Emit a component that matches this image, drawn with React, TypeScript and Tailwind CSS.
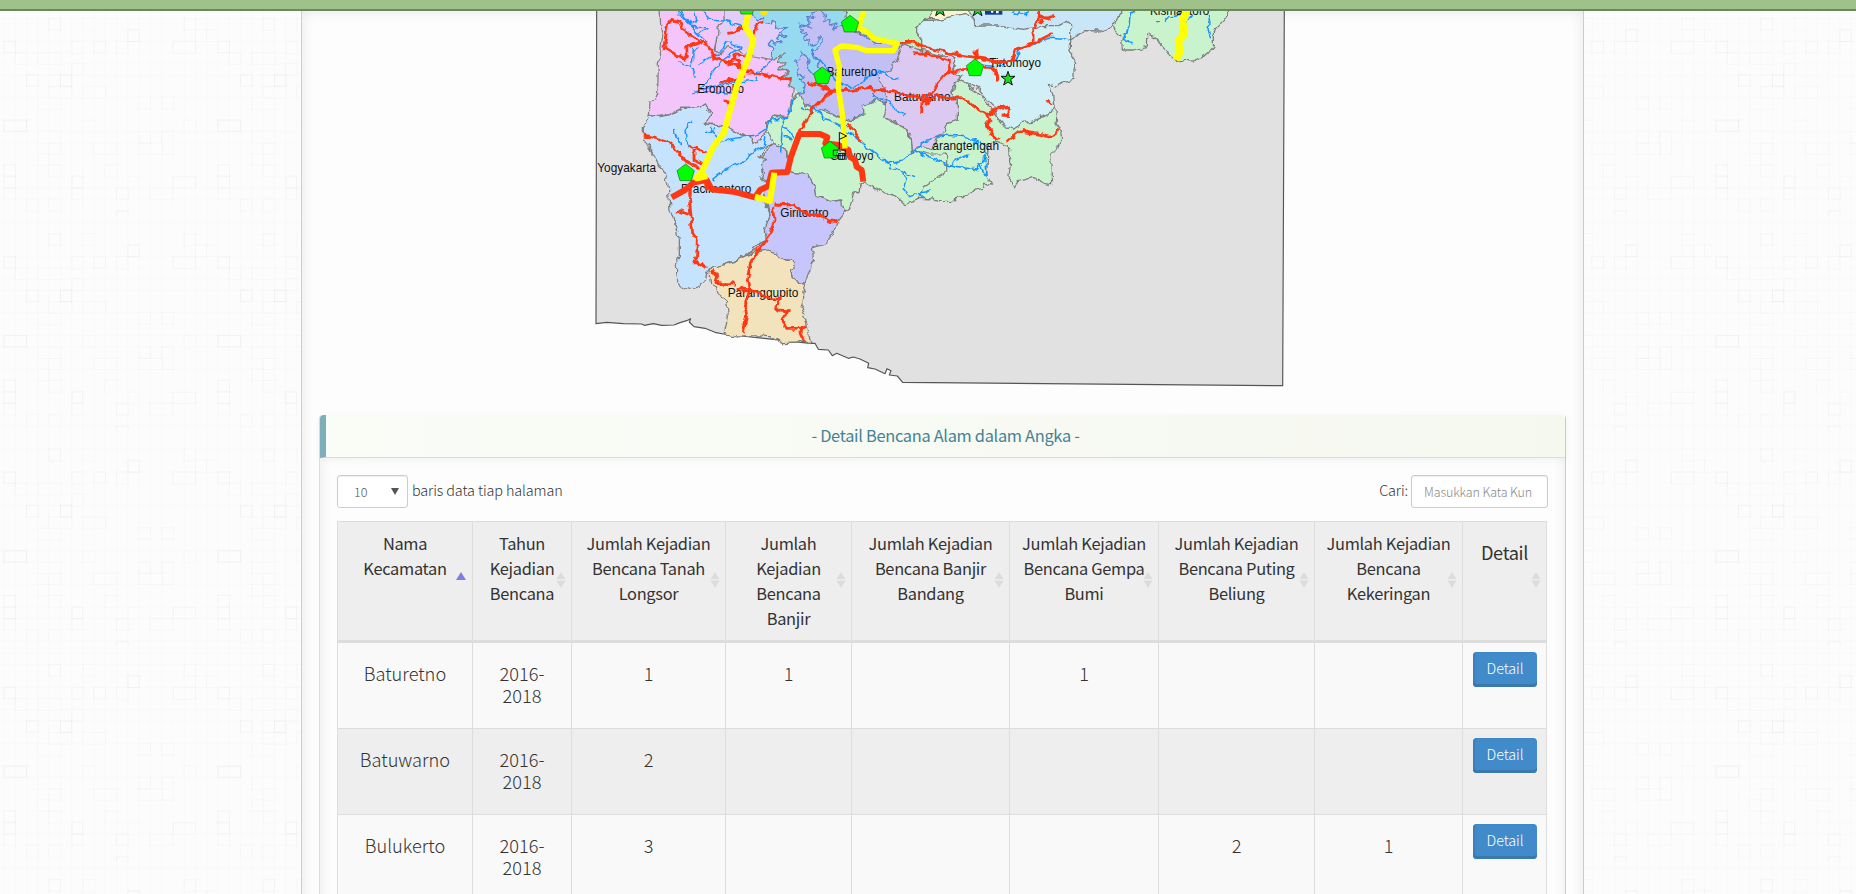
import React from "react";

const sans = "font-['Noto_Sans_CJK_SC',sans-serif]";

/* ---------- Page texture ---------- */

const tiles: [number, number, number, number, number][] = [
  [147, 56, 34, 34, 10], [250, 56, 32, 34, 5], [384, 90, 33, 34, 12], [12, 125, 34, 33, 12],
  [282, 125, 34, 33, 10], [216, 125, 33, 34, 8], [350, 125, 34, 34, 6], [384, 125, 33, 34, 5],
  [520, 125, 66, 34, 10], [46, 159, 34, 33, 6], [114, 159, 70, 33, 6], [216, 191, 33, 33, 6],
  [80, 225, 34, 34, 12], [182, 225, 33, 34, 14], [147, 225, 34, 34, 4], [249, 260, 67, 34, 7],
  [147, 260, 68, 34, 6], [417, 292, 34, 34, 7], [486, 292, 34, 34, 6], [114, 294, 68, 34, 5],
  [12, 361, 68, 33, 14], [249, 361, 33, 33, 5], [417, 395, 34, 34, 8], [486, 395, 33, 67, 9],
  [114, 395, 68, 34, 5], [282, 429, 68, 33, 7], [417, 429, 70, 33, 6], [147, 429, 35, 33, 6],
  [114, 462, 32, 33, 5], [12, 495, 34, 34, 9], [147, 495, 36, 34, 8], [316, 495, 34, 34, 5],
  [12, 529, 34, 34, 10], [216, 529, 32, 34, 12], [384, 531, 33, 34, 5], [520, 531, 66, 32, 9],
  [12, 565, 34, 33, 7], [216, 565, 32, 33, 8], [350, 565, 34, 33, 9], [450, 565, 68, 33, 6],
  [80, 598, 34, 36, 6], [147, 598, 36, 36, 6], [350, 634, 34, 34, 12], [316, 668, 68, 32, 6],
  [587, 90, 34, 34, 5], [553, 56, 33, 34, 6], [620, 90, 22, 34, 6], [553, 361, 33, 34, 4],
];

const steps = Array.from({ length: 19 }, (_, i) => 12 + i * 33.8);

function Texture({ from, className, id }: { from: number; className: string; id: string }) {
  return (
    <div className={className}>
      <svg className="h-full w-full" viewBox={`${from} 11 ${id === "l" ? 301 : 272} 883`} preserveAspectRatio="none">
        <defs>
          <pattern id={"tex-" + id} width="642" height="646" patternUnits="userSpaceOnUse" patternTransform="scale(0.33333)">
            {steps.map((s, i) => (
              <g key={i} stroke="#000" strokeWidth="3" strokeOpacity="0.008">
                <path d={`M${s} 0V646`} />
                <path d={`M0 ${s + 10}H642`} />
              </g>
            ))}
            {tiles.map(([x, y, w, h, o], i) => (
              <g key={i} fill="none" strokeWidth="3">
                <path d={`M${x + 3} ${y + 3}h${w - 5}v${h - 5}h${5 - w}z`} stroke="#fff" strokeOpacity="0.8" />
                <path d={`M${x} ${y}h${w}v${h}h${-w}z`} stroke="#000" strokeOpacity={o / 340} />
              </g>
            ))}
          </pattern>
        </defs>
        <rect x={from} y="0" width="400" height="894" fill={`url(#tex-${id})`} />
      </svg>
    </div>
  );
}

/* ---------- Map ---------- */

const landmass =
  "M20 20L18 971 50 967 100 971 155 972 163 976 190 971 215 976 252 975 270 968 290 962 302 956 298 966 312 980 345 985 375 997 400 1002 660 1030 675 1030 685 1048 715 1050 727 1067 740 1060 775 1075 790 1071 810 1077 836 1090 833 1103 855 1107 885 1121 891 1106 903 1112 898 1125 922 1128 938 1147 2078 1157 2083 20Z";

const regions: { c: string; s?: string; d: string }[] = [
  { c: "#96daf0", s: "none", d: "M480 20H800V200L700 240 630 280 600 270 500 180Z" },
  { c: "#e1cdf8", s: "#5b7fd0", d: "M383 20L480 20 490 50 505 60 525 50 515 68 540 75 545 58 560 68 555 85 590 82 575 98 590 110 572 108 560 118 572 130 552 132 545 120 535 132 548 145 540 160 550 172 535 182 490 178 440 158 410 150 375 158 378 100Z" },
  { c: "#f3c5fb", s: "#808080", d: "M210 20L212 80 216 105 210 140 212 165 205 190 203 280 195 300 180 303 178 342 205 350 240 345 250 338 275 325 325 325 342 314 350 325 362 340 348 372 380 373 415 380 428 395 450 405 480 408 490 430 505 428 520 405 530 395 530 368 550 345 592 350 603 310 610 270 598 255 602 240 575 230 598 218 590 208 565 210 588 188 560 190 585 162 550 180 525 175 480 165 440 150 413 140 395 160 372 153 383 100 385 75 405 60 405 20Z" },
  { c: "#c2bff4", s: "#5b7fd0", d: "M690 33L665 40 675 52 650 50 662 66 652 75 668 85 630 72 640 88 633 98 650 104 638 115 658 122 655 138 680 130 690 110 700 120 690 140 665 150 672 170 690 185 682 200 700 215 672 225 650 200 655 182 645 162 630 160 632 175 617 185 628 205 622 225 640 228 628 238 645 250 640 262 650 275 625 280 635 310 655 318 690 330 705 328 740 350 760 355 780 362 810 345 822 340 820 320 850 302 900 310 960 300 960 130 860 130 790 90 750 80 728 88 738 70 715 75 722 58 700 62 710 45Z" },
  { c: "#b9f2ba", d: "M760 20L772 80 800 95 860 120 905 128 940 132 995 150 995 120 980 100 980 80 995 62 1020 55 1040 20Z" },
  { c: "#f8f4cf", d: "M1030 20L1025 33 1018 55 1080 58 1130 40 1140 55 1150 40 1150 20Z" },
  { c: "#c8e6f8", d: "M1140 20L1145 50 1160 80 1440 125 1480 92 1530 93 1565 82 1590 70 1600 20Z" },
  { c: "#c9f3cd", d: "M1110 240L1095 250 1088 290 1105 300 1105 360 1070 370 1055 400 1025 445 990 435 965 460 960 410 940 380 890 362 882 340 888 315 860 300 845 310 820 318 822 345 780 362 745 352 690 330 645 318 625 278 612 290 603 330 590 352 552 346 530 370 530 400 550 430 590 450 600 515 650 525 675 560 680 585 720 605 750 600 762 637 778 628 790 585 808 570 810 545 825 548 885 582 908 582 945 611 985 595 1030 597 1050 607 1085 607 1100 592 1135 588 1150 570 1180 565 1183 550 1205 552 1190 525 1195 430 1220 425 1258 440 1262 485 1255 540 1275 558 1285 545 1330 532 1365 550 1385 555 1382 470 1400 445 1415 410 1412 395 1398 370 1402 335 1392 318 1380 325 1330 350 1270 380 1220 350 1180 290Z" },
  { c: "#d0eff7", d: "M980 80L995 62 1040 60 1070 52 1130 40 1148 60 1155 75 1220 75 1300 88 1350 80 1400 80 1430 65 1442 75 1442 125 1440 155 1460 190 1452 210 1452 238 1420 245 1400 258 1378 253 1388 285 1392 318 1380 340 1330 362 1300 368 1270 388 1240 375 1220 350 1215 320 1195 300 1165 265 1110 240 1115 230 1090 215 1095 175 1050 165 995 150 995 120 980 100Z" },
  { c: "#dbc9f2", d: "M940 132L995 150 1000 160 1060 170 1080 165 1097 178 1088 212 1115 230 1088 260 1090 290 1105 300 1105 360 1070 370 1058 400 1040 415 1025 450 990 435 965 460 960 410 945 385 905 362 885 355 885 320 890 290 885 265 868 240 868 222 900 210 920 180Z" },
  { c: "#c6c5fc", d: "M550 430L575 440 590 450 590 510 600 515 650 525 675 560 680 585 720 605 755 600 758 620 765 638 740 670 730 700 710 730 668 745 670 780 655 820 645 850 610 840 605 810 613 782 585 780 545 755 487 752 520 690 540 645 520 570 515 540 515 470Z" },
  { c: "#c5e3fd", d: "M178 342L205 350 240 345 275 325 325 325 342 314 362 340 348 372 415 380 450 405 480 408 490 430 505 428 530 390 545 415 550 430 525 445 510 470 525 480 512 500 520 515 512 535 535 550 525 570 522 600 540 645 523 690 525 720 500 740 487 752 430 785 365 805 350 820 345 845 330 858 300 868 280 862 265 850 257 825 257 800 262 780 268 765 268 720 260 680 240 630 235 560 225 520 205 490 185 455 160 415 160 385Z" },
  { c: "#f2e3bc", d: "M365 805L430 785 487 758 535 750 560 760 585 780 613 782 615 800 605 810 610 840 645 850 638 880 642 895 632 925 645 940 640 950 650 970 662 1027 625 1026 575 1028 540 1010 500 1008 430 1007 402 1000 415 950 410 905 385 885 380 860 362 850 358 820Z" },
  { c: "#c9f3cd", d: "M1595 20L1595 40 1580 60 1565 80 1595 110 1597 150 1630 150 1672 138 1673 105 1690 112 1720 140 1750 175 1770 181 1810 183 1855 160 1870 140 1870 95 1900 65 1915 45 1915 20Z" },
];

const rivers = [
  "M265 40L350 128M270 35L300 72 320 60 315 35M300 75L355 85 325 103 300 75M340 38L360 58 405 60 460 82M395 150L410 125 453 140 400 180 322 280M310 140L308 180 300 200 265 188M300 200L316 230M310 160L325 140M325 193L365 168 390 165M310 275L360 262 430 248 500 240 505 215 545 180M340 275L440 280",
  "M305 358L285 390 290 425 300 440M255 390L268 425 275 435M342 393L375 400M357 385L375 405M375 385L370 400M375 408L395 428 450 412 500 405 530 385 540 358 595 352M365 540L390 520 430 495 455 490 490 455 520 440 525 410",
  "M618 288L605 325 578 365 572 455M578 383L600 392 608 415M580 410L605 420M630 320L660 335 680 325 705 355 745 375 770 395 800 415 845 455 895 490 940 480 975 450 1000 425 1060 405 1130 410 1170 430 1195 440 1180 485 1160 510 1080 495 1040 480 1000 465 970 450",
  "M1080 495L1100 480 1135 465M1165 490L1190 530M1180 455L1188 500 1192 528M895 490L900 502 975 530M940 515L948 540 940 570 960 590 985 580 1010 575 1022 565M985 578L1005 592",
  "M665 145L675 165 705 200 735 240 780 262 820 250 825 232 870 215 925 240M848 275L855 295 885 300 945 350M1175 195L1220 200 1275 180 1290 145 1340 130 1375 115 1420 118 1445 125",
  "M1635 36L1620 45 1618 70 1600 118 1628 132M1695 66L1710 62M1725 62L1735 52 1790 42M1790 68L1805 45M1855 45L1860 70 1850 85 1862 115M1265 38L1280 44 1290 38 1308 44 1318 36",
];

const roads = [
  "M222 140L232 75 245 58 270 65 275 85 330 125 290 140 292 170 280 175 222 142M330 125L355 140 375 175 450 200 470 215 500 220 605 238M420 190L440 162 465 168M435 165L455 210M412 100L430 98 455 85 460 92M490 108L505 70 518 66M390 248L430 240 465 228M405 300L415 312 422 305Z",
  "M160 405L200 412 240 432 260 455 290 485 330 505M300 438L330 452 352 458M312 450L312 480 350 500M298 590L302 640 308 700 322 720 320 770 312 785 325 798 340 790 352 803",
  "M655 248L720 270 780 272 840 262 860 272 910 272 950 288 1015 290 1045 250 1078 210 1080 185 1010 160 965 158M725 272L665 330 630 398M925 127L970 127 1010 142 1090 162 1160 173 1220 185 1265 185 1275 152 1330 130 1385 102M1330 130L1328 85M1335 83L1345 55 1342 35M1345 45L1370 55 1392 45M1355 55L1355 70M1158 145L1158 185M1065 225L1110 212 1150 210M1180 205L1205 205 1222 220 1223 245",
  "M995 342L996 300 1020 300 1040 285 1070 295 1120 293 1150 320 1190 345 1200 360 1192 378 1205 400 1225 418M1185 345L1215 330 1240 318 1255 330 1253 347 1238 345M1250 425L1290 393 1330 400 1360 405 1380 412 1395 405 1400 385M1370 297L1385 312M1000 300L1010 310 1020 312",
  "M770 370L790 390 812 422M550 612L610 615 655 645 690 645 712 662 742 665M548 620L552 665 530 720 500 755 480 795 472 840 478 870 465 920 470 945 460 1000M370 812L380 830 375 845 395 850 435 852M440 866L480 870 540 895 570 898 560 930 598 932 575 955 590 985 630 985 650 980M632 985L630 1000 645 1028M258 630L302 645",
];

const pent = "M0-26L26-6 17 24-17 24-26-6Z";
const star = "M0-22L5-7 21-7 8 3 13 19 0 10-13 19-8 3-21-7-5-7Z";

const labels: [number, number, number, string][] = [
  [22, 515, 176, "Yogyakarta"], [322, 278, 140, "Eromoko"], [273, 579, 211, "Pracimantoro"],
  [710, 227, 152, "Baturetno"], [912, 304, 170, "Batuwarno"], [720, 479, 130, "Giriwoyo"],
  [1027, 451, 200, "arangtengah"], [1198, 200, 155, "Tirtomoyo"], [571, 652, 145, "Giritontro"],
  [413, 890, 212, "Paranggupito"], [1680, 45, 178, "Kismantoro"],
];

function RegionMap() {
  return (
    <svg className="block h-[382px] w-[705px]" viewBox="0 33 2115 1146">
      <defs>
        <filter id="rough" filterUnits="userSpaceOnUse" x="0" y="0" width="2115" height="1179" colorInterpolationFilters="sRGB">
          <feTurbulence type="fractalNoise" baseFrequency="0.045" numOctaves="2" seed="4" result="n" />
          <feDisplacementMap in="SourceGraphic" in2="n" scale="20" xChannelSelector="R" yChannelSelector="G" />
        </filter>
      </defs>
      <path d={landmass} fill="#e1e1e1" stroke="#555" strokeWidth="3.5" strokeLinejoin="round" />
      <g filter="url(#rough)">
        <g strokeWidth="3.8" strokeLinejoin="round">
          {regions.map((r, i) => (
            <path key={i} d={r.d} fill={r.c} stroke={r.s ?? "#7d7d7d"} />
          ))}
        </g>
        <path d="M965 450L1015 462 1070 462 1070 515 1030 540 1000 560 988 595" fill="none" stroke="#7d7d7d" strokeWidth="3.5" />
        <g fill="none" stroke="#1493ff" strokeWidth="4.4" strokeLinejoin="round">
          {rivers.map((d, i) => <path key={i} d={d} />)}
        </g>
      </g>
      <g fill="#111" fontSize="37" className="font-['Liberation_Sans',sans-serif]">
        {labels.map(([x, y, w, t]) => (
          <text key={t} x={x} y={y} textLength={w} lengthAdjust="spacingAndGlyphs">{t}</text>
        ))}
      </g>
      <g fill="none" stroke="#ff3813" strokeWidth="8.5" strokeLinejoin="round" filter="url(#rough)">
        {roads.map((d, i) => <path key={i} d={d} />)}
      </g>
      <g fill="none" stroke="#ff3813" strokeWidth="18" strokeLinejoin="round">
        <path d="M245 592L285 570 310 548 350 540 365 568 430 575 495 592 510 570 535 558 545 518 592 516 603 470 628 402 690 402 712 412 706 430 745 435 775 450 780 470 795 480 800 500 815 510 820 545" />
        <path d="M345 530L350 570M300 560L300 590" strokeWidth="10" />
      </g>
      <g fill="none" stroke="#ffff00" strokeWidth="18" strokeLinejoin="round">
        <path d="M478 33L465 80 490 118 480 160 465 200 440 260 408 375 402 398 370 440 335 515 320 535 352 528" />
        <path d="M495 590L540 603 553 518" />
        <path d="M765 445L757 340 745 265 748 200 735 150 755 138 800 142 830 152 910 152 922 130 900 126 850 115 835 98 805 82 822 33" strokeWidth="16" />
        <path d="M1795 20L1778 60 1782 105 1765 120 1770 155 1758 180" strokeWidth="22" />
      </g>
      <circle cx="522" cy="34" r="12" fill="#ffe600" />
      <g fill="#00ff00" stroke="#1a6b1a" strokeWidth="2">
        {[[697, 227], [780, 72], [720, 450], [287, 518], [1155, 203], [470, 18]].map(([x, y]) => (
          <path key={x} d={pent} transform={`translate(${x} ${y})`} />
        ))}
      </g>
      <g fill="#16e016" stroke="#111" strokeWidth="3">
        <path d={star} transform="translate(1254 236)" />
        <path d={star} transform="translate(1050 28)" />
        <path d={star} transform="translate(1163 28)" />
      </g>
      <path d="M1185 33V44H1237V33" fill="#0b3a9a" />
      <path d="M1203 33V38H1210V33ZM1218 33V40H1226V33Z" fill="#fff" />
      <path d="M748 448V397L770 408 748 418M730 450H766V467H730ZM745 460H764V478H745Z" fill="none" stroke="#111" strokeWidth="3" />
    </svg>
  );
}

/* ---------- Table ---------- */

const columns: { lines: string[]; w: string }[] = [
  { lines: ["Nama", "Kecamatan"], w: "w-[135px]" },
  { lines: ["Tahun", "Kejadian", "Bencana"], w: "w-[99px]" },
  { lines: ["Jumlah Kejadian", "Bencana Tanah", "Longsor"], w: "w-[154px]" },
  { lines: ["Jumlah", "Kejadian", "Bencana", "Banjir"], w: "w-[126px]" },
  { lines: ["Jumlah Kejadian", "Bencana Banjir", "Bandang"], w: "w-[158px]" },
  { lines: ["Jumlah Kejadian", "Bencana Gempa", "Bumi"], w: "w-[149px]" },
  { lines: ["Jumlah Kejadian", "Bencana Puting", "Beliung"], w: "w-[156px]" },
  { lines: ["Jumlah Kejadian", "Bencana", "Kekeringan"], w: "w-[148px]" },
  { lines: ["Detail"], w: "w-[84px]" },
];

const rows = [
  ["Baturetno", "1", "1", "", "1", "", ""],
  ["Batuwarno", "2", "", "", "", "", ""],
  ["Bulukerto", "3", "", "", "", "2", "1"],
];

function SortMark({ active }: { active: boolean }) {
  return (
    <svg className={`absolute top-[50px] h-4 w-[10px] ${active ? "right-[6px]" : "right-[5px]"}`} viewBox="0 0 10 16">
      {active ? <path d="M5 0L10 8H0Z" fill="#7d80e2" /> : <path d="M5 0L9.5 7H.5ZM.5 8.6H9.5L5 16Z" fill="#dcdcdc" />}
    </svg>
  );
}

function DataTable() {
  return (
    <table className="w-[1210px] table-fixed border-separate border-spacing-0 border-l border-t border-[#ddd] text-center text-[#333]">
      <thead>
        <tr className="bg-[#eee]">
          {columns.map((c, i) => (
            <th key={i} className={`${c.w} relative h-[121px] border-b-[3px] border-r border-[#ddd] p-0 align-top font-normal`}>
              <div className={i === 8 ? "pt-[16px] text-[18.2px] leading-[28px] tracking-[-0.35px]" : "pt-[9px] text-[16.4px] leading-[25px] tracking-[-0.31px]"}>
                {c.lines.map((l) => <div key={l} className="whitespace-nowrap">{l}</div>)}
              </div>
              <SortMark active={i === 0} />
            </th>
          ))}
        </tr>
      </thead>
      <tbody>
        {rows.map((r, i) => (
          <tr key={r[0]} className={i % 2 ? "bg-[#eee]" : "bg-[#f9f9f9]"}>
            {[r[0], "2016-|2018", ...r.slice(1)].map((v, j) => (
              <td key={j} className="h-[86px] border-b border-r border-[#ddd] p-0 pt-[19px] align-top text-[18.2px] font-light leading-[22px]">
                {v.split("|").map((p) => <div key={p}>{p}</div>)}
              </td>
            ))}
            <td className="h-[86px] border-b border-r border-[#ddd] p-0 pl-[10px] pt-[9px] align-top">
              <button className="block h-[35px] w-16 rounded-[4px] bg-[#428bca] pb-[3px] text-[14.4px] font-light leading-[32px] tracking-[-0.1px] text-white shadow-[inset_0_-3px_0_#3a78b0,inset_2px_0_2px_#3b7fba]">Detail</button>
            </td>
          </tr>
        ))}
      </tbody>
    </table>
  );
}

export default function App() {
  return (
    <div className={`${sans} flex h-[894px] w-[1856px] flex-col overflow-hidden bg-[#fcfcfc]`}>
      <header className="h-[11px] shrink-0 border-b-2 border-[#6c875a] bg-[#9ec28a]" />
      <div className="flex min-h-0 flex-1">
        <Texture id="l" from={0} className="w-[301px] shrink-0" />
        <main className="flex h-[960px] w-[1283px] shrink-0 flex-col overflow-hidden border-x border-[#ccc] bg-[#fdfdfd] shadow-[inset_0_0_14px_rgba(0,0,0,0.09)]">
          <div className="h-[404px] shrink-0 pl-[288px]">
            <RegionMap />
          </div>
          <section className="ml-[17px] h-[556px] w-[1247px] shrink-0 rounded-t border-x border-l-[#ddd] border-r-[#ccc] shadow-[inset_0_0_14px_rgba(0,0,0,0.08)]">
            <h2 className="h-[43px] rounded-tl border-b border-l-[6px] border-b-[#bce8f1] border-l-[#7cafba] bg-linear-to-r from-[#fafcf7] to-[#f5f8ef] text-center text-[16.4px] leading-[41px] tracking-[-0.31px] text-[#458294] shadow-[0_2px_8px_rgba(0,0,0,0.05)]">
              - Detail Bencana Alam dalam Angka -
            </h2>
            <div className="px-[17px]">
              <div className="flex h-[63px] items-start justify-between pt-[17px] text-[14.4px] font-light leading-[30px] text-[#333]">
                <div className="flex gap-1">
                  <div className="flex h-[33px] w-[71px] items-center justify-between rounded-[3px] border border-[#ccc] bg-white pl-4 pr-2 text-[12.5px] text-[#555] shadow-[inset_0_1px_1px_rgba(0,0,0,0.075)]">
                    10
                    <svg className="h-[7px] w-2" viewBox="0 0 8 7"><path d="M0 0H8L4 7Z" fill="#555" /></svg>
                  </div>
                  <span className="tracking-[-0.1px]">baris data tiap halaman</span>
                </div>
                <label className="flex gap-[3px]">
                  <span className="tracking-[-0.1px]">Cari:</span>
                  <input className="h-[33px] w-[137px] rounded-[3px] border border-[#ccc] bg-white px-3 text-[12.5px] font-light tracking-[-0.12px] shadow-[inset_0_1px_1px_rgba(0,0,0,0.075)] placeholder:text-[#888]" placeholder="Masukkan Kata Kun" />
                </label>
              </div>
              <DataTable />
            </div>
          </section>
        </main>
        <Texture id="r" from={1584} className="w-[272px] shrink-0" />
      </div>
    </div>
  );
}
